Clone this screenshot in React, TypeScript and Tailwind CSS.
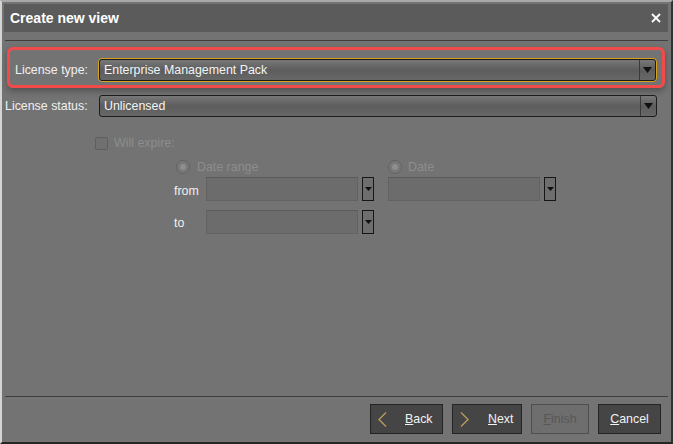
import React from 'react';

const font = "font-['Liberation_Sans','Arial',sans-serif]";

function Caret({ size = 'md' }: { size?: 'md' | 'sm' }) {
  return size === 'md' ? (
    <svg width="9" height="6" viewBox="0 0 9 6">
      <path d="M0 0 L9 0 L4.5 6 Z" fill="#111" />
    </svg>
  ) : (
    <svg width="7" height="4" viewBox="0 0 7 4">
      <path d="M0 0 L7 0 L3.5 4 Z" fill="#111" />
    </svg>
  );
}

function Select({ value, focused }: { value: string; focused?: boolean }) {
  const inner = (
    <div className="flex h-full items-stretch rounded-[3px] border border-[#1c1c1c] bg-linear-to-b from-[#787878] via-[#5d5d5d] to-[#676767]">
      <div className="flex flex-1 items-center pl-[4px] text-[12.4px] text-[#f4f4f4]">{value}</div>
      <div className="flex w-[16px] items-center justify-center border-l border-[#3a3a3a]">
        <Caret />
      </div>
    </div>
  );
  if (focused) {
    return <div className="h-[24px] w-[559px] shrink-0 rounded-[4px] border border-[#d9a21e]">{inner}</div>;
  }
  return <div className="h-[22px] w-[558px] shrink-0">{inner}</div>;
}

function DateInput() {
  return (
    <div className="flex h-[24px] items-stretch gap-[4px]">
      <div className="w-[152px] border border-[#636363] border-t-[#5a5a5a] bg-[#6c6c6c]" />
      <div className="flex w-[12px] items-center justify-center border border-[#161616] bg-[#6e6e6e]">
        <Caret size="sm" />
      </div>
    </div>
  );
}

function Radio() {
  return (
    <div className="flex h-[14px] w-[14px] items-center justify-center rounded-full border border-[#626262] bg-[#787878]">
      <div className="h-[6px] w-[6px] rounded-full bg-[#8e8e8e]" />
    </div>
  );
}

function Chevron({ dir }: { dir: 'left' | 'right' }) {
  return (
    <svg width="9" height="15" viewBox="0 0 9 15">
      <path
        d={dir === 'left' ? 'M8 0.5 L1 7.5 L8 14.5' : 'M1 0.5 L8 7.5 L1 14.5'}
        fill="none"
        stroke="#b99a5c"
        strokeWidth="1.4"
      />
    </svg>
  );
}

export default function App() {
  return (
    <div
      className={`flex h-[444px] w-[673px] flex-col border-2 border-l-[#d4d4d4] border-t-[#a8a8a8] border-r-[#333333] border-b-[#262626] bg-[#737373] ${font}`}
    >
      {/* Title bar */}
      <div className="ml-[2px] mr-[3px] mt-[2px] flex h-[28px] items-center justify-between bg-[#5b5b5b] pl-[6px] pr-[7px]">
        <span className="text-[14px] font-bold text-white">Create new view</span>
        <svg width="10" height="10" viewBox="0 0 10 10">
          <path d="M1 1 L9 9 M9 1 L1 9" stroke="#fff" strokeWidth="1.8" />
        </svg>
      </div>

      <div className="mx-[3px] mt-[8px] h-px bg-[#3e3e3e]" />

      {/* Highlighted license type row */}
      <div className="ml-[5px] mt-[6px] flex h-[41px] w-[658px] items-start rounded-[6px] border-[3px] border-[#f04a4a] pt-[8px] shadow-[0_3px_6px_rgba(0,0,0,0.3)]">
        <div className="flex items-center">
          <span className="w-[88px] shrink-0 pl-[5px] text-[12.4px] text-[#f0f0f0]">License type:</span>
          <Select value="Enterprise Management Pack" focused />
        </div>
      </div>

      {/* License status */}
      <div className="ml-[3px] mt-[7px] flex items-center">
        <span className="w-[94px] shrink-0 text-[12.4px] text-[#f0f0f0]">License status:</span>
        <Select value="Unlicensed" />
      </div>

      {/* Will expire */}
      <div className="ml-[93px] mt-[20px] flex h-[13px] items-center gap-[6px]">
        <div className="h-[13px] w-[13px] rounded-[2px] border border-[#5e5e5e] bg-[#707070]" />
        <span className="text-[12.4px] text-[#8d8d8d]">Will expire:</span>
      </div>

      {/* Date options */}
      <div className="ml-[172px] mt-[10px] flex flex-col">
        <div className="flex h-[14px] items-center">
          <div className="flex w-[214px] items-center gap-[7px] pl-[2px]">
            <Radio />
            <span className="text-[12.4px] text-[#8d8d8d]">Date range</span>
          </div>
          <div className="flex items-center gap-[6px]">
            <Radio />
            <span className="text-[12.4px] text-[#8d8d8d]">Date</span>
          </div>
        </div>

        <div className="mt-[3px] flex items-center">
          <span className="w-[32px] pt-[5px] text-[12.4px] text-[#f0f0f0]">from</span>
          <DateInput />
          <div className="w-[14px]" />
          <DateInput />
        </div>

        <div className="mt-[9px] flex items-center">
          <span className="w-[32px] pt-[3px] text-[12.4px] text-[#f0f0f0]">to</span>
          <DateInput />
        </div>
      </div>

      <div className="flex-1" />

      {/* Footer */}
      <div className="mx-[3px] h-px bg-[#3e3e3e]" />
      <div className="flex justify-end gap-[9px] pb-[8px] pr-[10px] pt-[7px] text-[12.4px]">
        <button className="flex h-[30px] w-[73px] items-center border border-[#242424] bg-[#454545] pl-[7px] text-[#f2f2f2]">
          <Chevron dir="left" />
          <span className="ml-[18px]">
            <span className="underline">B</span>ack
          </span>
        </button>
        <button className="flex h-[30px] w-[70px] items-center border border-[#242424] bg-[#454545] pl-[7px] text-[#f2f2f2]">
          <Chevron dir="right" />
          <span className="ml-[19px]">
            <span className="underline">N</span>ext
          </span>
        </button>
        <button className="flex h-[30px] w-[58px] items-center justify-center border border-[#4e4e4e] bg-[#6e6e6e] text-[#575757]">
          <span>
            <span className="underline">F</span>inish
          </span>
        </button>
        <button className="flex h-[30px] w-[63px] items-center justify-center border border-[#242424] bg-[#454545] text-[#f2f2f2]">
          <span>
            <span className="underline">C</span>ancel
          </span>
        </button>
      </div>
    </div>
  );
}
